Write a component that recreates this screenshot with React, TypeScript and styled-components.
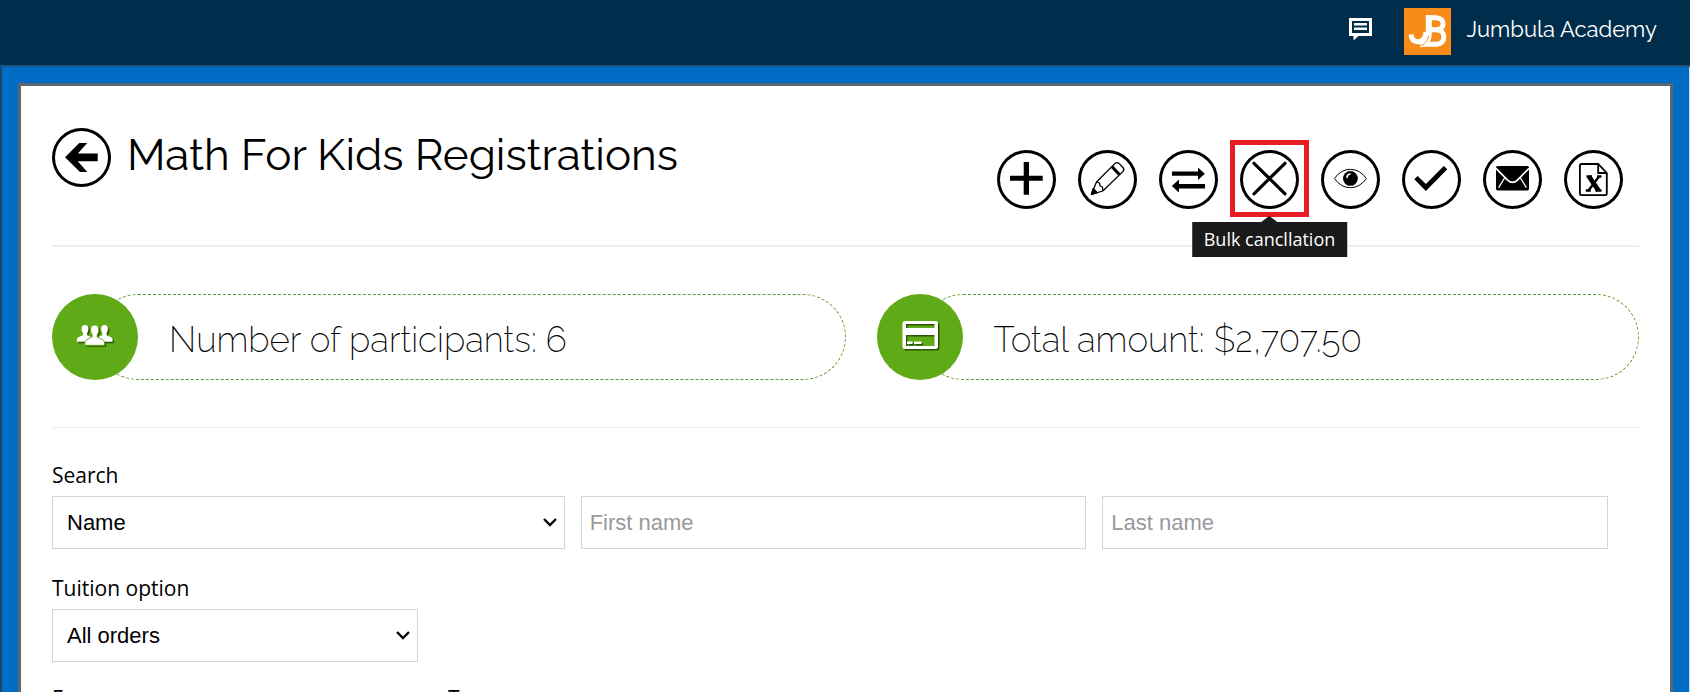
import React from "react";
import styled, { createGlobalStyle } from "styled-components";

const heading = `Raleway, Lato, "Open Sans", sans-serif`;
const body = `"Segoe UI", "Open Sans", "Noto Sans", sans-serif`;

const GlobalStyle = createGlobalStyle`
  *, *::before, *::after { box-sizing: border-box; }
  html, body { margin: 0; height: 100%; overflow: hidden; background: #006cc4; }
  body { font-family: ${body}; color: #000; }
  h1, p { margin: 0; }
  svg { display: block; }
`;

const Shell = styled.div`
  min-height: 100vh;
  display: flex;
  flex-direction: column;
`;

const TopBar = styled.header`
  display: flex;
  align-items: flex-start;
  justify-content: flex-end;
  gap: 32px;
  height: 67px;
  padding: 8px 33px 0 0;
  background: #002d4b;
  border-bottom: 2px solid #1f5480;
`;

const MessagesButton = styled.button`
  padding: 10px 0 0;
  border: 0;
  background: none;
`;

const Account = styled.a`
  display: flex;
  align-items: flex-start;
  gap: 16px;
  color: #fff;
  text-decoration: none;
  font: 400 22px/42px ${heading};
`;

const Stage = styled.main`
  flex: 1;
  display: flex;
  padding: 16px 16px 0;
  border-left: 2px solid #17456b;
  border-right: 1px solid #c9dcee;
`;

const Panel = styled.section`
  flex: 1;
  min-width: 0;
  background: #fff;
  border: 3px solid #5b6670;
  border-bottom: 0;
  padding: 42px 31px 0;
`;

const PageHead = styled.div`
  display: flex;
  justify-content: space-between;
  align-items: flex-start;
  padding: 0 16px 36px 0;
  border-bottom: 2px solid #eee;
`;

const TitleGroup = styled.div`
  display: flex;
  align-items: flex-start;
  gap: 16px;
`;

const Title = styled.h1`
  font: 400 44px/54px ${heading};
  white-space: nowrap;
`;

const RoundButton = styled.button`
  flex: none;
  width: 59px;
  height: 59px;
  padding: 0;
  border: 0;
  border-radius: 50%;
  background: #fff;
  box-shadow: inset 0 0 0 3px #000;
  color: #000;
`;

const Actions = styled.div`
  display: flex;
  gap: 22px;
  padding-top: 22px;
`;

const ActionSlot = styled.div`
  position: relative;
  display: flex;
`;

const Highlight = styled.span`
  position: absolute;
  inset: -10px -10px -8px;
  border: 5px solid #e81c24;
  pointer-events: none;
`;

const Tooltip = styled.span`
  position: absolute;
  top: 72px;
  left: 50%;
  transform: translateX(-50%);
  padding: 4px 12px 5px;
  background: #1a1a1a;
  color: #fff;
  font-size: 18px;
  line-height: 26px;
  white-space: nowrap;
  &::before {
    content: "";
    position: absolute;
    left: 50%;
    bottom: 100%;
    margin-left: -8px;
    border: solid transparent;
    border-width: 0 8px 6px;
    border-bottom-color: #1a1a1a;
  }
`;

const Stats = styled.div`
  display: grid;
  grid-template-columns: 1fr 1fr;
  padding: 47px 0;
  border-bottom: 1px solid #eee;
`;

const Stat = styled.div`
  display: flex;
  & + & { padding-left: 31px; }
`;

const StatIcon = styled.div`
  position: relative;
  flex: none;
  width: 86px;
  height: 86px;
  margin-right: -43px;
  border-radius: 50%;
  background: #60a917;
`;

const StatPill = styled.p`
  flex: 1;
  display: flex;
  align-items: center;
  height: 86px;
  padding: 6px 0 0 73px;
  border: 1px dashed #5f9a2a;
  border-radius: 43px;
  font: 200 35px/40px ${heading};
  white-space: nowrap;
`;

const Filters = styled.form`
  display: flex;
  flex-direction: column;
  gap: 25px;
  padding: 33px 31px 0 0;
`;

const FilterGroup = styled.div`
  display: flex;
  flex-direction: column;
  gap: 7px;
`;

const Label = styled.label`
  font-size: 21px;
  line-height: 28px;
`;

const Controls = styled.div`
  display: flex;
  gap: 16px;
`;

const SelectBox = styled.div<{ $narrow?: boolean }>`
  position: relative;
  flex: ${(p) => (p.$narrow ? "0 0 366px" : "1 1 25px")};
`;

const Select = styled.select`
  appearance: none;
  width: 100%;
  height: 53px;
  padding: 0 40px 0 14px;
  border: 1px solid #d4d4d4;
  border-radius: 0;
  background: #fff;
  color: #000;
  font: 22px "Liberation Sans", Arial, sans-serif;
`;

const Chevron = styled.svg`
  position: absolute;
  right: 7px;
  top: 21px;
  pointer-events: none;
`;

const Input = styled.input`
  flex: 1 1 0;
  min-width: 0;
  height: 53px;
  padding: 0 8px;
  border: 1px solid #d4d4d4;
  border-radius: 0;
  font: 22px "Liberation Sans", Arial, sans-serif;
  &::placeholder { color: #999; opacity: 1; }
`;

const DateRow = styled.div`
  display: grid;
  grid-template-columns: 366px 366px;
  gap: 30px;
  margin-top: -3px;
`;

const Icon = ({ children }: { children: React.ReactNode }) => (
  <svg width="59" height="59" viewBox="0 0 59 59" fill="currentColor" aria-hidden="true">
    {children}
  </svg>
);

const actions = [
  { name: "Add", art: <path d="M26.7 12h5.3v13.7h13.7v5H32v14h-5.3v-14H13v-5h13.7z" /> },
  {
    name: "Edit",
    art: (
      <g fill="none" stroke="currentColor" strokeWidth="1.3" strokeLinejoin="round">
        <path d="M18.5 32 36.8 13.6q2.2-1.8 4.4 0l3.6 3.6q2 2.2 0 4.4L24.8 41l-11.4 3.3z" />
        <path d="M18.5 32l3 1 .5 3 2.5 1 .3 4" />
        <path d="M13.4 44.3l5.8-1.7-4-4.2z" fill="currentColor" />
        <path d="M33.8 16.5l7.6 8" strokeWidth="3.2" />
      </g>
    ),
  },
  {
    name: "Transfer",
    art: <path d="M13 21.6h26V17.6l6.8 6.2-6.8 6.2v-4.2H13zM46 38.4H20v4.2l-7.2-6.5 7.2-6.5v4.400h26z" />,
  },
  {
    name: "Bulk cancellation",
    art: <path d="M14 13.3l31 30.5M45 13.3L14 43.8" stroke="currentColor" strokeWidth="3.2" strokeLinecap="round" />,
  },
  {
    name: "View",
    art: (
      <>
        <path d="M13.4 28.5Q20 19.3 29.4 19.3T45.4 28.5Q38.8 37.7 29.4 37.7T13.4 28.5z" fill="none" stroke="currentColor" />
        <circle cx="29.4" cy="28.4" r="7.4" />
        <path d="M26 27.4q.2-3 3-3.4" stroke="#fff" strokeWidth="1.6" fill="none" strokeLinecap="round" />
      </>
    ),
  },
  { name: "Confirm", art: <path d="M12.3 29.2l3.4-3.2 8.2 8.1L41.8 16l3.5 3.3-21.4 21.8z" /> },
  {
    name: "Email",
    art: (
      <>
        <rect x="13" y="16" width="33" height="24.6" rx="1.8" />
        <path d="M13 18.3l11.6 11.8q4.9 4.6 9.8 0L46 18.3" fill="none" stroke="#fff" strokeWidth="1.7" />
        <path d="M21.6 28l-6 9.6M37.4 28l6 9.6" stroke="#fff" strokeWidth="1.3" />
      </>
    ),
  },
  {
    name: "Export to Excel",
    art: (
      <>
        <path d="M17.5 14h16.7l8.6 9v20.5q0 1.6-1.6 1.6H17.5q-1.6 0-1.6-1.6V15.6q0-1.6 1.6-1.6zM34.2 14v9h8.6" fill="none" stroke="currentColor" strokeWidth="1.8" />
        <path d="M22.5 26.5h5.5M33 26.5h4.5M21.8 40.5h5M31.5 40.5h6" stroke="currentColor" strokeWidth="2.4" />
        <path d="M25 26.5l9.5 14" stroke="currentColor" strokeWidth="4.8" />
        <path d="M35 26.5l-10.5 14" stroke="currentColor" strokeWidth="2.4" />
      </>
    ),
  },
];

const SelectField = ({ id, value, narrow }: { id: string; value: string; narrow?: boolean }) => (
  <SelectBox $narrow={narrow}>
    <Select id={id} defaultValue={value}>
      <option>{value}</option>
    </Select>
    <Chevron width="16" height="12" viewBox="0 0 16 12" fill="none" stroke="#000" strokeWidth="2.4">
      <path d="M2 2l6 6 6-6" />
    </Chevron>
  </SelectBox>
);

const Person = ({ x, y, s = 1 }: { x: number; y: number; s?: number }) => (
  <path
    transform={`translate(${x} ${y}) scale(${s})`}
    d="M0 0c3.200 0 4.300 2.200 4.100 5.200-.1 2-.8 3.300-1.600 4.500v2.200c1.500 1.600 7 1.800 7.300 5.600v2.800H-9.800v-2.800c.3-3.800 5.800-4 7.300-5.600V9.700c-.8-1.200-1.500-2.500-1.600-4.500C-4.300 2.200-3.200 0 0 0z"
  />
);

export default function App() {
  return (
    <Shell>
      <GlobalStyle />
      <TopBar>
        <MessagesButton type="button" aria-label="Messages">
          <svg width="23" height="23" viewBox="0 0 23 23" fill="#fff">
            <path fillRule="evenodd" d="M0 0h23v18H9.5L4.5 22.5V18H0zM3 3v12h17V3z" />
            <path d="M5 5h13v2.5H5zM5 9.5h13V12H5z" />
          </svg>
        </MessagesButton>
        <Account href="#account">
          <svg width="47" height="47" viewBox="0 0 47 47" fill="none" aria-hidden="true">
            <rect width="47" height="47" fill="#f78c1a" />
            <g stroke="#fff" strokeWidth="5">
              <path d="M22 9.700H32c9.500 0 9.500 12 0 12H27M32 21.700c10.500 0 10.500 14.600 0 14.600H18" />
              <path d="M24.800 7.200v17.800c0 7-3 11-9 11.200" strokeWidth="6" />
              <path d="M22 24c-.3 8.500-5 9.700-8.500 9.700-4 0-6-3-6.500-7.200" />
            </g>
            <path d="M24.500 28c-.8 5.500-4 9-9 10" stroke="#f78c1a" strokeWidth="1" />
          </svg>
          Jumbula Academy
        </Account>
      </TopBar>
      <Stage>
        <Panel>
          <PageHead>
            <TitleGroup>
              <RoundButton type="button" aria-label="Back">
                <Icon>
                  <path d="M13 29.3L27.3 15h8L25.8 25.5h19.900v7.700H25.800L35.300 44H28z" />
                </Icon>
              </RoundButton>
              <Title>Math For Kids Registrations</Title>
            </TitleGroup>
            <Actions>
              {actions.map(({ name, art }) => (
                <ActionSlot key={name}>
                  <RoundButton type="button" aria-label={name}>
                    <Icon>{art}</Icon>
                  </RoundButton>
                  {name === "Bulk cancellation" && (
                    <>
                      <Highlight />
                      <Tooltip role="tooltip">Bulk cancllation</Tooltip>
                    </>
                  )}
                </ActionSlot>
              ))}
            </Actions>
          </PageHead>
          <Stats>
            <Stat>
              <StatIcon>
                <svg width="86" height="86" viewBox="0 0 86 86" aria-hidden="true">
                  <g fill="#2c5208" transform="translate(1.5 1.5)">
                    <Person x={33} y={31} s={0.83} />
                    <Person x={52.5} y={31} s={0.83} />
                    <Person x={42.7} y={31} />
                  </g>
                  <g fill="#fff">
                    <Person x={33} y={31} s={0.83} />
                    <Person x={52.5} y={31} s={0.83} />
                    <g stroke="#60a917" strokeWidth="1">
                      <Person x={42.7} y={31} />
                    </g>
                  </g>
                </svg>
              </StatIcon>
              <StatPill>Number of participants: 6</StatPill>
            </Stat>
            <Stat>
              <StatIcon>
                <svg width="86" height="86" viewBox="0 0 86 86" aria-hidden="true">
                  {["#2c5208", "#fff"].map((color, i) => (
                    <g key={color} transform={i ? undefined : "translate(1.5 1.5)"} fill={color}>
                      <path fillRule="evenodd" d="M28 27h30.500q2.500 0 2.500 2.500v23q0 2.500-2.500 2.500H28q-2.500 0-2.500-2.500v-23Q25.500 27 28 27zM29 30v4h28.500v-4zM29 41v11h28.500V41z" />
                      <path d="M30 47.5h5.5V50H30zM37 47.5h7.5V50H37z" />
                    </g>
                  ))}
                </svg>
              </StatIcon>
              <StatPill>Total amount: $2,707.50</StatPill>
            </Stat>
          </Stats>
          <Filters>
            <FilterGroup>
              <Label htmlFor="search-by">Search</Label>
              <Controls>
                <SelectField id="search-by" value="Name" />
                <Input aria-label="First name" placeholder="First name" />
                <Input aria-label="Last name" placeholder="Last name" />
              </Controls>
            </FilterGroup>
            <FilterGroup>
              <Label htmlFor="tuition">Tuition option</Label>
              <Controls>
                <SelectField id="tuition" value="All orders" narrow />
              </Controls>
            </FilterGroup>
            <DateRow>
              <FilterGroup>
                <Label htmlFor="from">From</Label>
                <Input id="from" />
              </FilterGroup>
              <FilterGroup>
                <Label htmlFor="to">To</Label>
                <Input id="to" />
              </FilterGroup>
            </DateRow>
          </Filters>
        </Panel>
      </Stage>
    </Shell>
  );
}
